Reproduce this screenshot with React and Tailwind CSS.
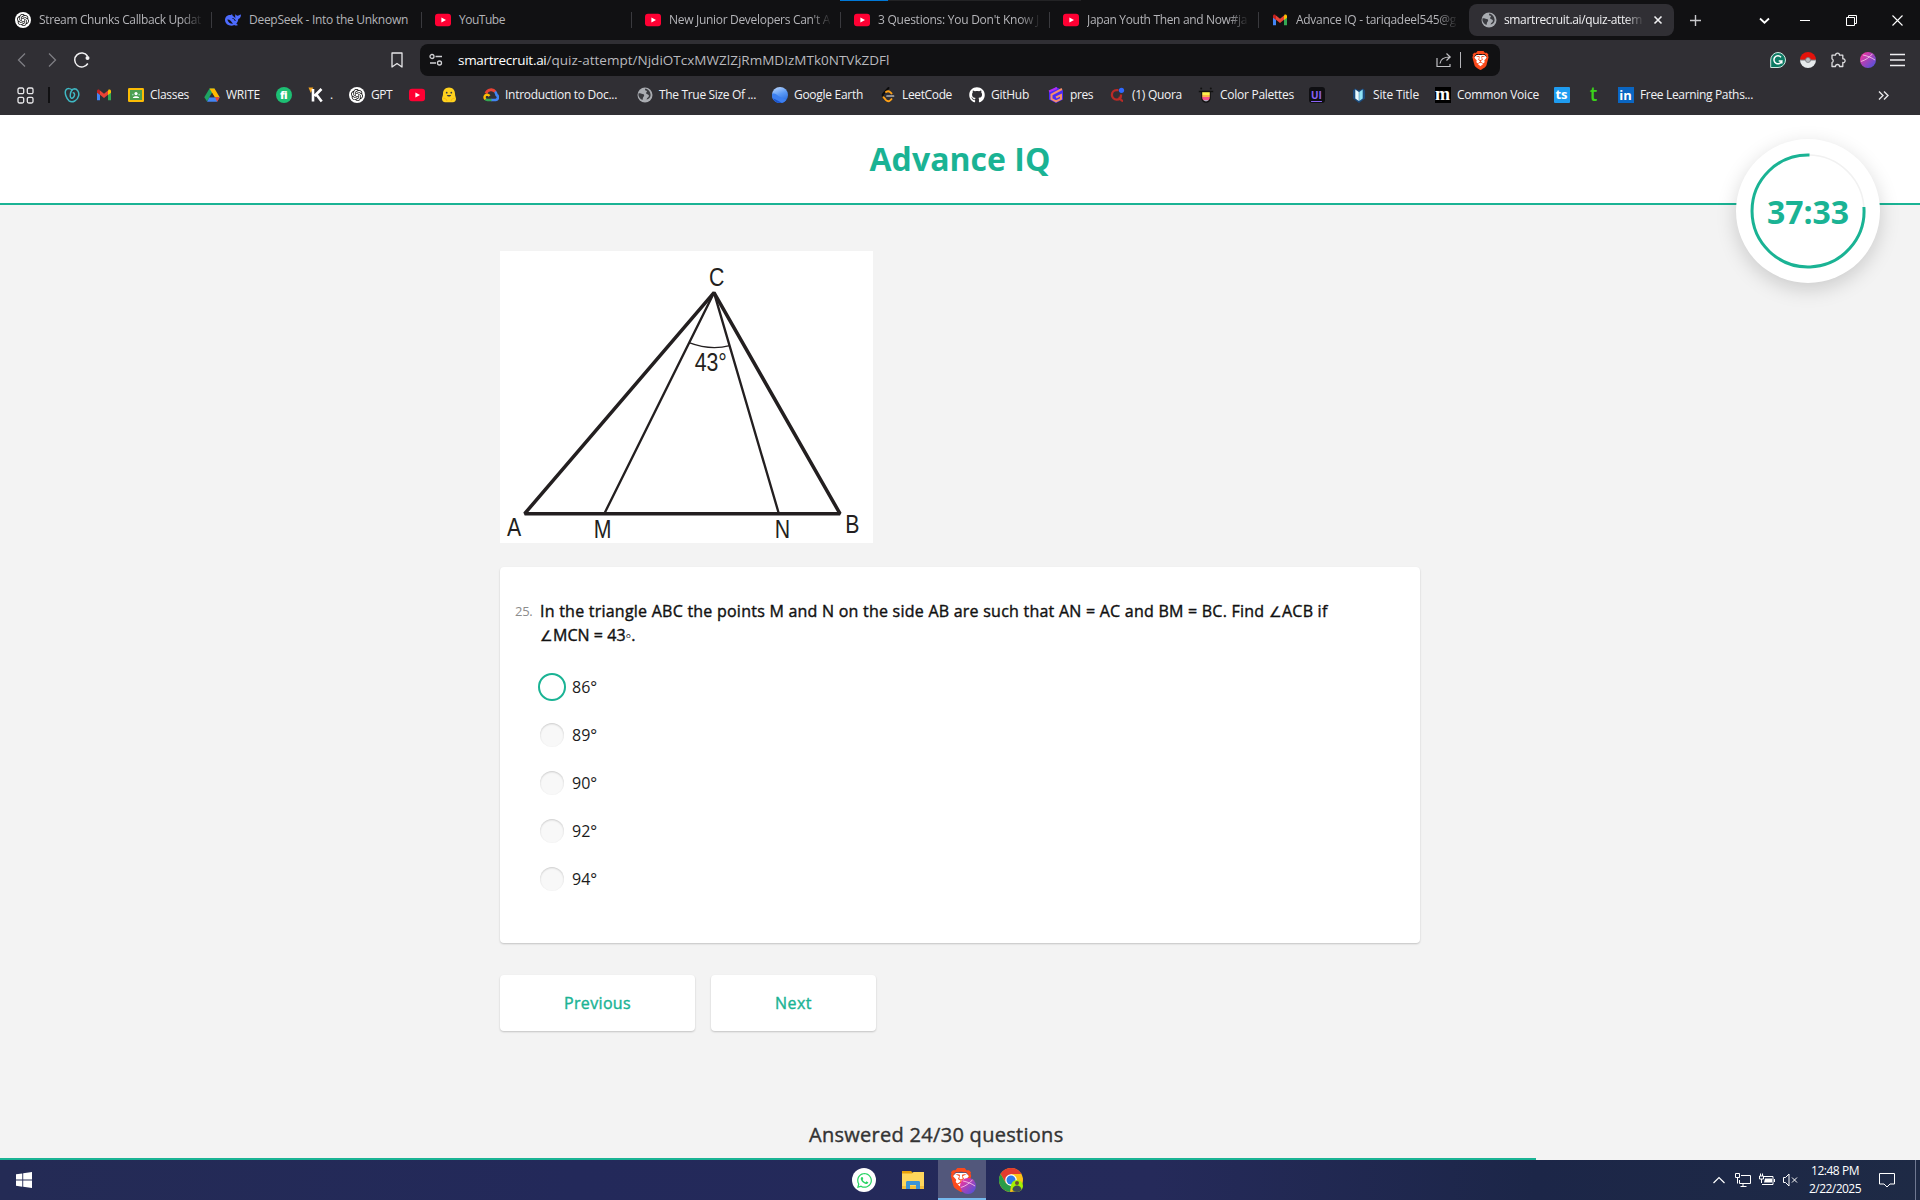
import { useLayoutEffect, useRef, useState } from "react";
import { SiOpenai, SiBrave } from "react-icons/si";
import { FaGithub, FaWhatsapp } from "react-icons/fa";

const ui = "font-['Open_Sans','Noto_Sans',sans-serif]";

/* Single-line label whose tracking is adjusted so that it fills `w` pixels. */
function Label({ children, w, className = "" }) {
  const ref = useRef(null);
  const [gap, setGap] = useState(0);
  useLayoutEffect(() => {
    const el = ref.current;
    el.style.letterSpacing = "0px";
    const natural = el.getBoundingClientRect().width;
    setGap((w - natural) / el.textContent.length);
    el.style.letterSpacing = `${(w - natural) / el.textContent.length}px`;
  }, [w, children]);
  return (
    <span ref={ref} className={`inline-block whitespace-pre ${className}`} style={{ letterSpacing: `${gap}px` }}>
      {children}
    </span>
  );
}

/* ---------- icons ---------- */
const Svg = ({ s = 16, vb = "0 0 16 16", children, className = "" }) => (
  <svg width={s} height={s} viewBox={vb} fill="none" className={`shrink-0 ${className}`}>{children}</svg>
);

const YouTube = () => (
  <Svg><rect y="1.800" width="16" height="12.400" rx="3" fill="#ff0033" /><path d="M6.400 5.400v5.200L11 8z" fill="#fff" /></Svg>
);
const Gmail = () => (
  <Svg>
    <path d="M1 4v9.200h3V7z" fill="#4285f4" />
    <path d="M15 4v9.200h-3V7z" fill="#34a853" />
    <path d="M12 3.800V8l3-2.300V4c0-1.600-1.700-2-2.600-1.200z" fill="#fbbc04" />
    <path d="M4 3.600v4.200L8 11l4-3.200V3.600L8 6.800z" fill="#ea4335" />
    <path d="M1 4v1.800L4 8V3.800l-.5-.9C2.500 2 1 2.600 1 4z" fill="#c5221f" />
  </Svg>
);
const Gpt = () => (
  <span className="flex h-4 w-4 shrink-0 items-center justify-center rounded-full bg-white text-[#111]"><SiOpenai size={12} /></span>
);
const DeepSeek = () => (
  <Svg>
    <path d="M0 8C0 4.500 3 2.500 6 3l1-1 .5 1.500c1.300.8 2.200 1.900 3.200 3C10 5 10 3.500 10.500 2c.5 1.200 1.200 1.800 2.200 1.700.9 0 1.700-1 3.300-1.200-.1 2.400-1 4-2.700 4.500-.2 2-1 3.500-2 4.700l1.700 1.300c-1.500.8-2.800.6-3.700 0C5.500 15 0 12.500 0 8z" fill="#4d6bfe" />
    <path d="M2.300 7.500c2.500-.3 4 2 5.700 4.300-3 0-5-1.500-5.700-4.300z" fill="#111113" />
    <path d="M7.500 6.500c1.500 0 2.500 1 2.700 2.500" stroke="#111113" />
  </Svg>
);
const Globe = () => (
  <Svg>
    <circle cx="8" cy="8" r="7.500" fill="#a9acb1" />
    <path d="M1.500 6.500c1.500-.5 2.500.5 4 .6 2 .1 2 1.800 1 2.700-.8.700-.5 2-1 3.200C3 12 1 9.500 1.500 6.500zM8.500 1.500c-1 1.200-.5 2 1 2.300.8.400.5 1.400-.5 2 .3 2 2.500 1.200 3 3-.2 1.500-2 1.700-2.500 3.700 3-.5 4.500-3 4-5.500-.5-2.800-2.300-5-5-5.500z" fill="#3a3b40" />
  </Svg>
);
const Brave = ({ s = 20 }) => (
  <span className="grid shrink-0 place-items-center">
    <Svg s={s} vb="0 0 24 24" className="col-start-1 row-start-1"><path d="M7 5h10l3 3-2 10-6 4-6-4L4 8z" fill="#fff" /></Svg>
    <SiBrave size={s} color="#fb4a1c" className="col-start-1 row-start-1" />
  </span>
);
const PinkBall = ({ s = 16 }) => (
  <Svg s={s}>
    <defs><linearGradient id="pk" x1="0" y1="0" x2="1" y2="1"><stop offset=".1" stopColor="#f0359f" /><stop offset=".95" stopColor="#4a53dc" /></linearGradient></defs>
    <circle cx="8" cy="8" r="8" fill="url(#pk)" />
    <path d="M.8 9.500C5 8.500 10 5 12.500 1.700M3 3c4 .8 8.500 2.500 12 5" stroke="#f3bde4" strokeWidth=".9" />
  </Svg>
);
const Loop = () => (
  <Svg><path d="M8.200 3.200C6.500 1.200 3.200 1 1.800 3.200.3 6 2.500 11.500 5 13.800c3.500 2.500 8.500-.3 9.600-5 .9-4-1.600-7-4.100-7C7.500 2 6 6 6.300 9.500c.2 2 2 2.200 3.200.8 1.400-1.600 1.500-4.300-.2-4.600" stroke="#3fb9c4" strokeWidth="1.500" strokeLinecap="round" /></Svg>
);
const Classroom = () => (
  <Svg><rect y="1" width="16" height="14" rx="1.200" fill="#fbbc05" /><rect x="2" y="3" width="12" height="10" fill="#4c9f50" /><circle cx="8" cy="6.600" r="1.600" fill="#fff" /><path d="M4.800 11c.3-2.300 6.100-2.300 6.400 0z" fill="#fff" /><circle cx="4.800" cy="7.600" r=".9" fill="#8fd0ae" /><circle cx="11.200" cy="7.600" r=".9" fill="#8fd0ae" /></Svg>
);
const Drive = () => (
  <Svg><path d="M5.500 1.500h5L8 6 3 14.500.3 10.200z" fill="#1ea362" /><path d="M5.500 1.500h5l5.200 8.700h-5z" fill="#ffba00" /><path d="M5.500 10.200h10.200L13 14.700H3z" fill="#4285f4" /><path d="M5.500 10.200L8 6l2.500 4.200z" fill="#302f34" /><path d="M11 10.200h4.700l-2.500 4.500z" fill="#ea4335" /></Svg>
);
const Fi = () => (
  <span className="flex h-4 w-4 shrink-0 items-center justify-center rounded-full bg-[#1dbf73] pb-px text-[11px] leading-none font-extrabold tracking-[-0.5px] text-white">fi</span>
);
const KIcon = () => (
  <Svg><path d="M.5.500h4.800L2.800 6z" fill="#f5a623" /><path d="M5 2v12.500M13.500 2L6.500 9M8 7l5.700 7.500" stroke="#fff" strokeWidth="2.600" /></Svg>
);
const Hug = () => (
  <Svg><path d="M8 .5c3.700 0 6 2.800 6 6.200 0 2 .8 3.300 1 4.800.2 2.200-1.500 4-3.500 3.800H4.500C2.500 15.500.8 13.700 1 11.500c.2-1.500 1-2.800 1-4.800C2 3.300 4.300.5 8 .5z" fill="#ffd21e" /><circle cx="5.700" cy="5.700" r=".9" fill="#3a3b45" /><circle cx="10.300" cy="5.700" r=".9" fill="#3a3b45" /><path d="M5.800 8c.8 2 3.600 2 4.400 0z" fill="#3a3b45" /><path d="M2.500 11.500c1.500-.5 3 .5 3.500 2.500M13.500 11.500c-1.500-.5-3 .5-3.500 2.500" stroke="#f5b50a" /></Svg>
);
const Cloud = () => (
  <Svg><path d="M3 6.500a5.400 5.400 0 0 1 9.500-1.500" stroke="#ea4335" strokeWidth="2.800" /><path d="M12 4.800c1.200 1 1.400 2 1.600 3.200a2.700 2.700 0 0 1-.8 5H8" stroke="#4285f4" strokeWidth="2.600" /><path d="M8.500 13H4.500c-1 0-1.800-.4-2.300-1" stroke="#34a853" strokeWidth="2.600" /><path d="M2.400 12.200C.8 10.500 1.500 7.800 4 7.600c1.200 0 2 .7 2.500 1.400" stroke="#fbbc05" strokeWidth="2.400" /></Svg>
);
const Earth = () => (
  <Svg>
    <defs><linearGradient id="er" x1="0" y1="0" x2=".4" y2="1"><stop offset="0" stopColor="#c6dcfb" /><stop offset=".55" stopColor="#5b9af6" /><stop offset="1" stopColor="#2d6fe0" /></linearGradient></defs>
    <circle cx="8" cy="8" r="8" fill="url(#er)" />
    <path d="M.1 7c3-1.500 4.500 1 6.500 2.200S11 11 14.500 12.700A8 8 0 0 1 .1 7z" fill="#3c7ff0" />
    <path d="M1 11.500c3 .5 5 2.500 9 4.200A8 8 0 0 1 1 11.500z" fill="#1c55cc" />
  </Svg>
);
const Leet = () => (
  <Svg><path d="M8.500 1L3.500 6.500c-1.200 1.200-1.200 2.500 0 3.700" stroke="#0b0b0b" strokeWidth="1.900" strokeLinecap="round" /><path d="M3.500 10.200l2.500 3c1.300 1.300 3 1.300 4.200.2l1.300-1.300M6 5c1.500-1.200 3-1 4.200.1l1.300 1.300" stroke="#ffa116" strokeWidth="1.900" strokeLinecap="round" /><path d="M7 9h6.500" stroke="#b3b3b3" strokeWidth="1.700" strokeLinecap="round" /></Svg>
);
const Pres = () => (
  <Svg><path d="M8 0l7 3.500v9L8 16l-7-3.500V5z" fill="#4a2bf5" /><path d="M14 2L3.500 7.500V12L8 14.300l5-2.500V8L8 10.500" stroke="#f58d6c" strokeWidth="2" /><path d="M1 4.500L9 1" stroke="#b22bf5" strokeWidth="2" /></Svg>
);
const Quora = () => (
  <Svg><path d="M8.500 3.200h-2a4.700 4.700 0 1 0 .2 9.400c2.800 0 4.300-1.800 4.300-4.600V7.500M8.500 10.500c2 .5 2 3.300 4.500 3.300" stroke="#b92b27" strokeWidth="2.300" /><circle cx="11.500" cy="3.300" r="2.600" fill="#2e69ff" /></Svg>
);
const Palette = () => (
  <Svg><path d="M.8 3.800h14.400v1.400H.8zM3.200 4h9.600v7a4.800 4.800 0 0 1-9.600 0z" fill="#111" /><circle cx="3.200" cy="1.500" r="1" fill="#111" /><circle cx="12.800" cy="1.500" r="1" fill="#111" /><path d="M4.200 5.200h7.600V8H4.200z" fill="#fff04d" /><path d="M4.200 8h7.600v2H4.200z" fill="#ffb44a" /><path d="M4.200 10h7.600c.3 2-1 3-1.300 3.300h-5c-.8-.6-1.500-1.800-1.300-3.300z" fill="#f5538a" /><path d="M5.500 13.200h5c-1 1.400-4 1.400-5 0z" fill="#d9d9f0" /></Svg>
);
const Site = () => (
  <Svg><path d="M2 3.500l2-2 4 2 4-2 2 2v8l-6 4.500-6-4.500z" fill="#1b4a7c" /><path d="M4.300 2.500L7.800 5v9L4.300 11.500z" fill="#e9fbff" /><path d="M11.700 2.500L8.200 5v9l3.500-2.500z" fill="#8fe3f7" /></Svg>
);
const Grammarly = () => (
  <Svg><path d="M8 .500a7.500 7.500 0 1 1 0 15H.700V8A7.400 7.400 0 0 1 8 .500z" fill="#0d7a63" stroke="#cfe8e1" strokeWidth="1" /><path d="M11 5.200A4 4 0 1 0 11.800 9H8.700M11.800 8.500v3" stroke="#fff" strokeWidth="1.500" /></Svg>
);
const Pokeball = () => (
  <Svg><path d="M0 8a8 8 0 0 1 16 0z" fill="#e3120b" /><path d="M0 8a8 8 0 0 0 16 0z" fill="#e6eaec" /><path d="M0 8h16" stroke="#77797d" strokeWidth="1" /><circle cx="8" cy="8" r="2.500" fill="#b7bcc0" stroke="#77797d" strokeWidth=".8" /></Svg>
);
const Puzzle = () => (
  <Svg><path d="M5.500 3.200a2 2 0 0 1 4 0h3.300v3.600a1.900 1.900 0 1 1 0 3.700v4H9.500a2 2 0 0 0-4 0H2v-4a2 2 0 0 0 0-3.700V3.200z" stroke="#dcdcde" strokeWidth="1.300" strokeLinejoin="round" /></Svg>
);
const Chrome = () => (
  <Svg s={24} vb="0 0 24 24">
    <circle cx="12" cy="12" r="12" fill="#fbc116" />
    <path d="M1.600 6A12 12 0 0 1 22.400 6H12l-5 9z" fill="#e33b2e" />
    <path d="M1.600 6l5.200 9L12 18l-1 6A12 12 0 0 1 1.600 6z" fill="#2a9c48" />
    <circle cx="12" cy="12" r="5.800" fill="#fff" /><circle cx="12" cy="12" r="4.500" fill="#2c7be8" />
    <circle cx="18" cy="18" r="6" fill="#a4f000" /><circle cx="18" cy="15" r="2" fill="#6d4a35" /><path d="M13.500 22c0-6 9-6 9 0A6 6 0 0 1 18 24a6 6 0 0 1-4.500-2z" fill="#3f4a57" />
  </Svg>
);
const Explorer = () => (
  <Svg s={22} vb="0 0 22 22"><path d="M0 2h9l2 2v3H0z" fill="#e8a008" /><path d="M0 4.500h10l1.500-1.500H22v17H0z" fill="#ffd65c" /><path d="M0 17h22v3H0z" fill="#f3bd3a" /><path d="M4 13.500c0-1 .5-1.500 1.500-1.500h11c1 0 1.500.5 1.500 1.500V20h-4v-4H8v4H4z" fill="#3a94d8" /></Svg>
);

/* ---------- browser chrome ---------- */
const fade = "[mask-image:linear-gradient(to_right,#000_88%,rgba(0,0,0,0.1))]";

function Tab({ icon, label, w, faded = true, width, last }) {
  return (
    <div className={`flex h-4 shrink-0 items-center gap-2 ${width} ${last ? "" : "border-r border-[#3a3a3e]"}`}>
      {icon}
      <Label w={w} className={faded ? fade : ""}>{label}</Label>
    </div>
  );
}

function TabStrip() {
  return (
    <div className="flex h-10 items-start bg-[#111113] text-[12px] text-[#b4b4b8]">
      <div className="flex h-10 w-[1469px] shrink-0 items-center gap-[13px] pl-[15px]">
        <Tab width="w-[197px]" icon={<Gpt />} label="Stream Chunks Callback Updat" w={162} />
        <Tab width="w-[197px]" icon={<DeepSeek />} label="DeepSeek - Into the Unknown" w={159} faded={false} />
        <Tab width="w-[197px]" icon={<YouTube />} label="YouTube" w={46} faded={false} />
        <Tab width="w-[196px]" icon={<YouTube />} label="New Junior Developers Can't A" w={161} />
        <Tab width="w-[196px]" icon={<YouTube />} label="3 Questions: You Don't Know J" w={161} />
        <Tab width="w-[196px]" icon={<YouTube />} label="Japan Youth Then and Now#ja" w={160} />
        <Tab width="w-[190px]" icon={<Gmail />} label="Advance IQ - tariqadeel545@g" w={160} last />
      </div>
      <div className="mt-1 flex h-8 w-[205px] shrink-0 items-center gap-[7px] rounded-lg bg-[#302f34] pl-3 text-[#f0f0f2]">
        <Globe />
        <Label w={138} className={fade}>smartrecruit.ai/quiz-attem</Label>
        <Svg s={10} vb="0 0 10 10" className="ml-1"><path d="M1.500 1.500l7 7m0-7l-7 7" stroke="#f0f0f2" strokeWidth="1.600" /></Svg>
      </div>
      <div className="flex h-10 flex-1 items-center pl-4">
        <Svg s={11} vb="0 0 11 11"><path d="M5.500 0v11M0 5.500h11" stroke="#c9c9cc" strokeWidth="1.400" /></Svg>
        <Svg s={11} vb="0 0 11 11" className="ml-[58px]"><path d="M1 3.500l4.500 4.200L10 3.500" stroke="#fff" strokeWidth="1.800" /></Svg>
        <div className="ml-[30px] h-px w-[10px] bg-white" />
        <Svg s={11} vb="0 0 11 11" className="ml-[36px]"><path d="M.5 2.500h8v8h-8zM2.500 2.500v-2h8v8h-2" stroke="#fff" /></Svg>
        <Svg s={11} vb="0 0 11 11" className="ml-[35px]"><path d="M.5.5l10 10m0-10l-10 10" stroke="#fff" strokeWidth="1.100" /></Svg>
      </div>
    </div>
  );
}

function Toolbar() {
  return (
    <div className="flex h-[38px] items-center bg-[#302f34] pt-0.5">
      <Svg className="ml-[14px]"><path d="M11 1.500L4.500 8l6.500 6.500" stroke="#7e7e83" strokeWidth="1.300" /></Svg>
      <Svg className="ml-[14px]"><path d="M5 1.500L11.500 8 5 14.500" stroke="#7e7e83" strokeWidth="1.300" /></Svg>
      <Svg className="ml-[14px]"><path d="M13.800 11.500A7 7 0 1 1 13.500 4" stroke="#f2f2f3" strokeWidth="1.500" /><circle cx="13.500" cy="6" r="2" fill="#f2f2f3" /></Svg>
      <Svg className="ml-[299px]"><path d="M3 1h10v14L8 11.500 3 15z" stroke="#e6e6e8" strokeWidth="1.300" strokeLinejoin="round" /></Svg>
      <div className="ml-[15px] flex h-8 w-[1080px] items-center rounded-lg bg-[#111113] text-[13.5px]">
        <Svg className="ml-[8px]"><circle cx="4" cy="4.500" r="2" stroke="#d0d0d3" strokeWidth="1.300" /><path d="M7.500 4.500H14M2 11h6" stroke="#d0d0d3" strokeWidth="1.300" /><circle cx="11.500" cy="11" r="2" stroke="#d0d0d3" strokeWidth="1.300" /></Svg>
        <div className="mt-px ml-[14px] flex flex-1 text-[#b9b9be]">
          <Label w={88.500} className="text-white">smartrecruit.ai</Label>
          <Label w={343}>/quiz-attempt/NjdiOTcxMWZlZjRmMDIzMTk0NTVkZDFl</Label>
        </div>
        <Svg><path d="M1 6v8.500h13V12M4 11.500C4.500 7 8 5 14 5M10.500 1.500L14.200 5l-3.700 3.500" stroke="#c0c0c4" strokeWidth="1.200" /></Svg>
        <div className="mr-[10px] ml-2 h-4 w-px bg-[#b5b5b8]" />
        <span className="mr-[10px]"><Brave s={19} /></span>
      </div>
      <div className="ml-auto flex items-center gap-[14px] pr-[14px]">
        <Grammarly /><Pokeball /><Puzzle /><PinkBall />
        <Svg><path d="M0 2.500h15M0 8h15M0 13.500h15" stroke="#efeff1" strokeWidth="1.300" /></Svg>
      </div>
    </div>
  );
}

const bookmarks = [
  ["w-8", <Loop />],
  ["w-8", <Gmail />],
  ["w-[76px]", <Classroom />, "Classes", 39],
  ["w-[72px]", <Drive />, "WRITE", 34],
  ["w-8", <Fi />],
  ["w-[41px]", <KIcon />, ".", 4],
  ["w-[60px]", <Gpt />, "GPT", 21],
  ["w-8", <YouTube />],
  ["w-[42px]", <Hug />],
  ["w-[154px]", <Cloud />, "Introduction to Doc...", 112],
  ["w-[135px]", <Globe />, "The True Size Of ...", 97],
  ["w-[108px]", <Earth />, "Google Earth", 69],
  ["w-[89px]", <Leet />, "LeetCode", 50],
  ["w-[79px]", <FaGithub size={16} className="shrink-0" color="#fff" />, "GitHub", 38],
  ["w-[62px]", <Pres />, "pres", 23],
  ["w-[88px]", <Quora />, "(1) Quora", 50],
  ["w-[111px]", <Palette />, "Color Palettes", 74],
  ["w-[42px]", <span className="flex h-4 w-4 items-center justify-center rounded-[3px] bg-[#0f0f12] text-[10px] leading-none font-bold text-[#8a63f5] underline underline-offset-2">UI</span>],
  ["w-[84px]", <Site />, "Site Title", 46],
  ["w-[119px]", <span className="flex h-4 w-4 shrink-0 items-center justify-center bg-black pb-0.5 font-['Liberation_Serif',serif] text-[18px] leading-none font-bold text-white">m</span>, "Common Voice", 82],
  ["w-[32px]", <span className="flex h-4 w-4 shrink-0 items-center justify-center rounded-[1px] bg-[#1f9cf0] pb-px text-[13px] leading-none font-bold text-white">ts</span>],
  ["w-[32px]", <span className="flex h-4 w-4 shrink-0 items-center justify-center pb-0.5 text-[19px] leading-none font-semibold text-[#3bd219]">t</span>],
  ["w-[140px]", <span className="flex h-4 w-4 shrink-0 items-center justify-center bg-[#0a66c2] text-[13px] leading-none font-bold text-white">in</span>, "Free Learning Paths...", 113],
];

function BookmarkBar() {
  return (
    <div className="flex h-[37px] items-center bg-[#302f34] pb-[3px] pl-[17px] text-[12px] text-[#f2f2f4]">
      <Svg s={17} vb="0 0 17 17"><g stroke="#e8e8ea" strokeWidth="1.300"><rect x="1" y="1" width="5.700" height="5.700" rx="1.500" /><rect x="10.300" y="1" width="5.700" height="5.700" rx="1.500" /><rect x="1" y="10.300" width="5.700" height="5.700" rx="1.500" /><rect x="10.300" y="10.300" width="5.700" height="5.700" rx="1.500" /></g></Svg>
      <div className="mr-[14px] ml-[14px] h-4 w-[1.5px] bg-[#101012]" />
      {bookmarks.map(([width, icon, text, w], i) => (
        <div key={i} className={`flex shrink-0 items-center gap-[6.5px] ${width}`}>
          {icon}
          {text && <Label w={w}>{text}</Label>}
        </div>
      ))}
      <Svg s={11} vb="0 0 11 11" className="mr-[31px] ml-auto"><path d="M1 1.500l4 4-4 4M6 1.500l4 4-4 4" stroke="#e8e8ea" strokeWidth="1.400" /></Svg>
    </div>
  );
}

/* ---------- quiz page ---------- */
function Timer() {
  return (
    <div className="absolute top-6 right-10 grid h-36 w-36 place-items-center rounded-full bg-white shadow-[0_6px_20px_rgba(0,0,0,0.17)]">
      <svg width="144" height="144" viewBox="0 0 144 144" fill="none" className="col-start-1 row-start-1">
        <circle cx="72" cy="72" r="56" stroke="#f1f1f1" strokeWidth="1.500" />
        <path d="M73.500 16A56 56 0 1 0 127.900 68" stroke="#1ab394" strokeWidth="3" />
      </svg>
      <span className="col-start-1 row-start-1 mt-0.5 text-[32px] leading-none font-bold text-[#1ab394]"><Label w={82}>37:33</Label></span>
    </div>
  );
}

const points = [
  ["C", 660, 137], ["A", 54, 887], ["M", 314, 893], ["N", 857, 893], ["B", 1069, 878], ["43°", 617, 392],
];

function Triangle() {
  return (
    <svg width="373" height="292" viewBox="30 33 1119 876" fill="none" stroke="#231f20" className="bg-white">
      <path d="M672 158L104 821H1050z" strokeWidth="10.500" strokeLinejoin="bevel" />
      <path d="M672 158L344 819M672 158L866 819" strokeWidth="7" />
      <path d="M597 308Q660 332 719 317" strokeWidth="4" />
      {points.map(([t, x, y]) => (
        <text key={t} transform={`translate(${x - 3} ${y}) scale(.83 1)`} fontSize="77" fill="#231f20" className="stroke-none font-['Liberation_Sans',sans-serif]">{t}</text>
      ))}
    </svg>
  );
}

const answers = ["86°", "89°", "90°", "92°", "94°"];
const medium = "font-normal [-webkit-text-stroke:0.4px_currentColor]";

function Quiz() {
  return (
    <main className="h-[1045px] bg-[#f3f3f3] text-[#1c1c1c]">
      <header className="relative flex h-[90px] items-center justify-center border-b-2 border-[#1ab394] bg-white">
        <h1 className="text-[32px] leading-none font-bold text-[#1ab394]"><Label w={181}>Advance IQ</Label></h1>
        <Timer />
      </header>
      <div className="mx-auto flex h-[953px] w-[920px] flex-col pt-[46px]">
        <Triangle />
        <section className="mt-6 h-[376px] w-full rounded bg-white pt-8 pl-[15px] shadow-[0_1px_2px_rgba(0,0,0,0.2)]">
          <div className="flex h-12 leading-6">
            <span className="w-[25px] text-[13px] text-[#8c8c8c]"><Label w={17.500}>25.</Label></span>
            <div className={`text-[16px] text-[#111] ${medium}`}>
              <div className="h-6"><Label w={787.500}>In the triangle ABC the points M and N on the side AB are such that AN = AC and BM = BC. Find <span className="text-[14px] leading-none">∠</span>ACB if</Label></div>
              <div className="h-6"><Label w={95.500}><span className="text-[14px] leading-none">∠</span>MCN = 43<span className="-mx-px font-['DejaVu_Sans',sans-serif] text-[13px] leading-none [-webkit-text-stroke:0.2px]">◦</span>.</Label></div>
            </div>
          </div>
          <ul className="mt-4 pl-[23px]">
            {answers.map((a, i) => (
              <li key={a} className="flex h-12 items-center text-[16px]">
                <span className={i === 0 ? "h-7 w-7 rounded-full border-2 border-[#1ab394] bg-white" : "mx-0.5 h-6 w-6 rounded-full bg-[#f8f8f8] shadow-[inset_0_1px_2px_rgba(0,0,0,0.18)]"} />
                <span className="ml-1.5">{a}</span>
              </li>
            ))}
          </ul>
        </section>
        <div className={`mt-8 flex gap-4 text-[16px] text-[#1ab394] ${medium}`}>
          <button className="h-14 w-[195px] rounded bg-white shadow-[0_1px_2px_rgba(0,0,0,0.2)]"><Label w={67}>Previous</Label></button>
          <button className="h-14 w-[165px] rounded bg-white shadow-[0_1px_2px_rgba(0,0,0,0.2)]"><Label w={37}>Next</Label></button>
        </div>
        <p className={`mt-auto mb-[7px] pl-[309px] text-[20px] leading-8 text-[#333] ${medium}`}><Label w={254.500}>Answered 24/30 questions</Label></p>
      </div>
      <div className="h-0.5 w-[1536px] bg-[#1ab394]" />
    </main>
  );
}

/* ---------- desktop taskbar ---------- */
function Taskbar() {
  return (
    <footer className="flex h-10 items-center bg-[linear-gradient(to_right,#242b55,#23295a_30%,#252a5a_60%,#1c2648_80%,#1e2a45)] text-[12px] text-white">
      <Svg className="ml-4"><path d="M0 2.300l6.300-.9v6.200H0zM7.200 1.200L16 0v7.600H7.200zM0 8.500h6.300v6.200L0 13.800zM7.200 8.500H16V16l-8.800-1.200z" fill="#fff" /></Svg>
      <div className="ml-[820px] flex h-6 w-6 items-center justify-center rounded-full bg-white text-[#2bd465]"><FaWhatsapp size={17} /></div>
      <span className="ml-[26px]"><Explorer /></span>
      <div className="ml-[14px] grid h-10 w-12 place-items-center border-b-2 border-[#76b9ed] bg-[#52577b]">
        <div className="relative mt-0.5 h-6 w-6">
          <span className="-ml-0.5 block"><Brave s={24} /></span>
          <span className="absolute -right-0.5 -bottom-0.5"><PinkBall s={16} /></span>
        </div>
      </div>
      <span className="ml-[13px]"><Chrome /></span>
      <div className="ml-auto flex h-10 items-center">
        <Svg s={12} vb="0 0 12 12"><path d="M.5 9L6 3.500 11.500 9" stroke="#fff" strokeWidth="1.200" /></Svg>
        <Svg className="ml-[10px]"><path d="M6 3.500h9.500v8H4.500V8M8 11.500v3M5.500 14.500h6M.5 1.500h4v4h-4zM2.500 5.500v6" stroke="#fff" /></Svg>
        <Svg className="ml-2"><path d="M4 4.500h10v8H3M15.500 7v3" stroke="#fff" /><path d="M6 6.500h7v4H5z" fill="#fff" /><path d="M.5 4h4v3h-4zM1.500 1.500V4M3.500 1.500V4M2.500 7v4" stroke="#fff" /></Svg>
        <Svg className="ml-2"><path d="M.5 5.500h2l3.500-3.500v12l-3.500-3.500h-2z" stroke="#fff" /><path d="M9 5.500l5 5m0-5l-5 5" stroke="#fff" /></Svg>
        <div className="ml-[10px] flex w-[52px] flex-col items-center leading-[18px]">
          <Label w={48}>12:48 PM</Label>
          <Label w={52}>2/22/2025</Label>
        </div>
        <Svg className="ml-[18px]"><path d="M.5 1.500h15v10.500H11L8 15l-3-3H.5z" stroke="#fff" /></Svg>
        <div className="mr-1 ml-[20px] h-10 w-px bg-[#6f7891]" />
      </div>
    </footer>
  );
}

export default function App() {
  return (
    <div className={`relative h-[1200px] w-[1920px] overflow-hidden ${ui}`}>
      <TabStrip />
      <Toolbar />
      <BookmarkBar />
      <Quiz />
      <Taskbar />
      <div className="absolute top-0 left-[840px] flex h-px"><span className="w-12 bg-[#0078d7]" /><span className="w-[193px] bg-[#232325]" /></div>
    </div>
  );
}
